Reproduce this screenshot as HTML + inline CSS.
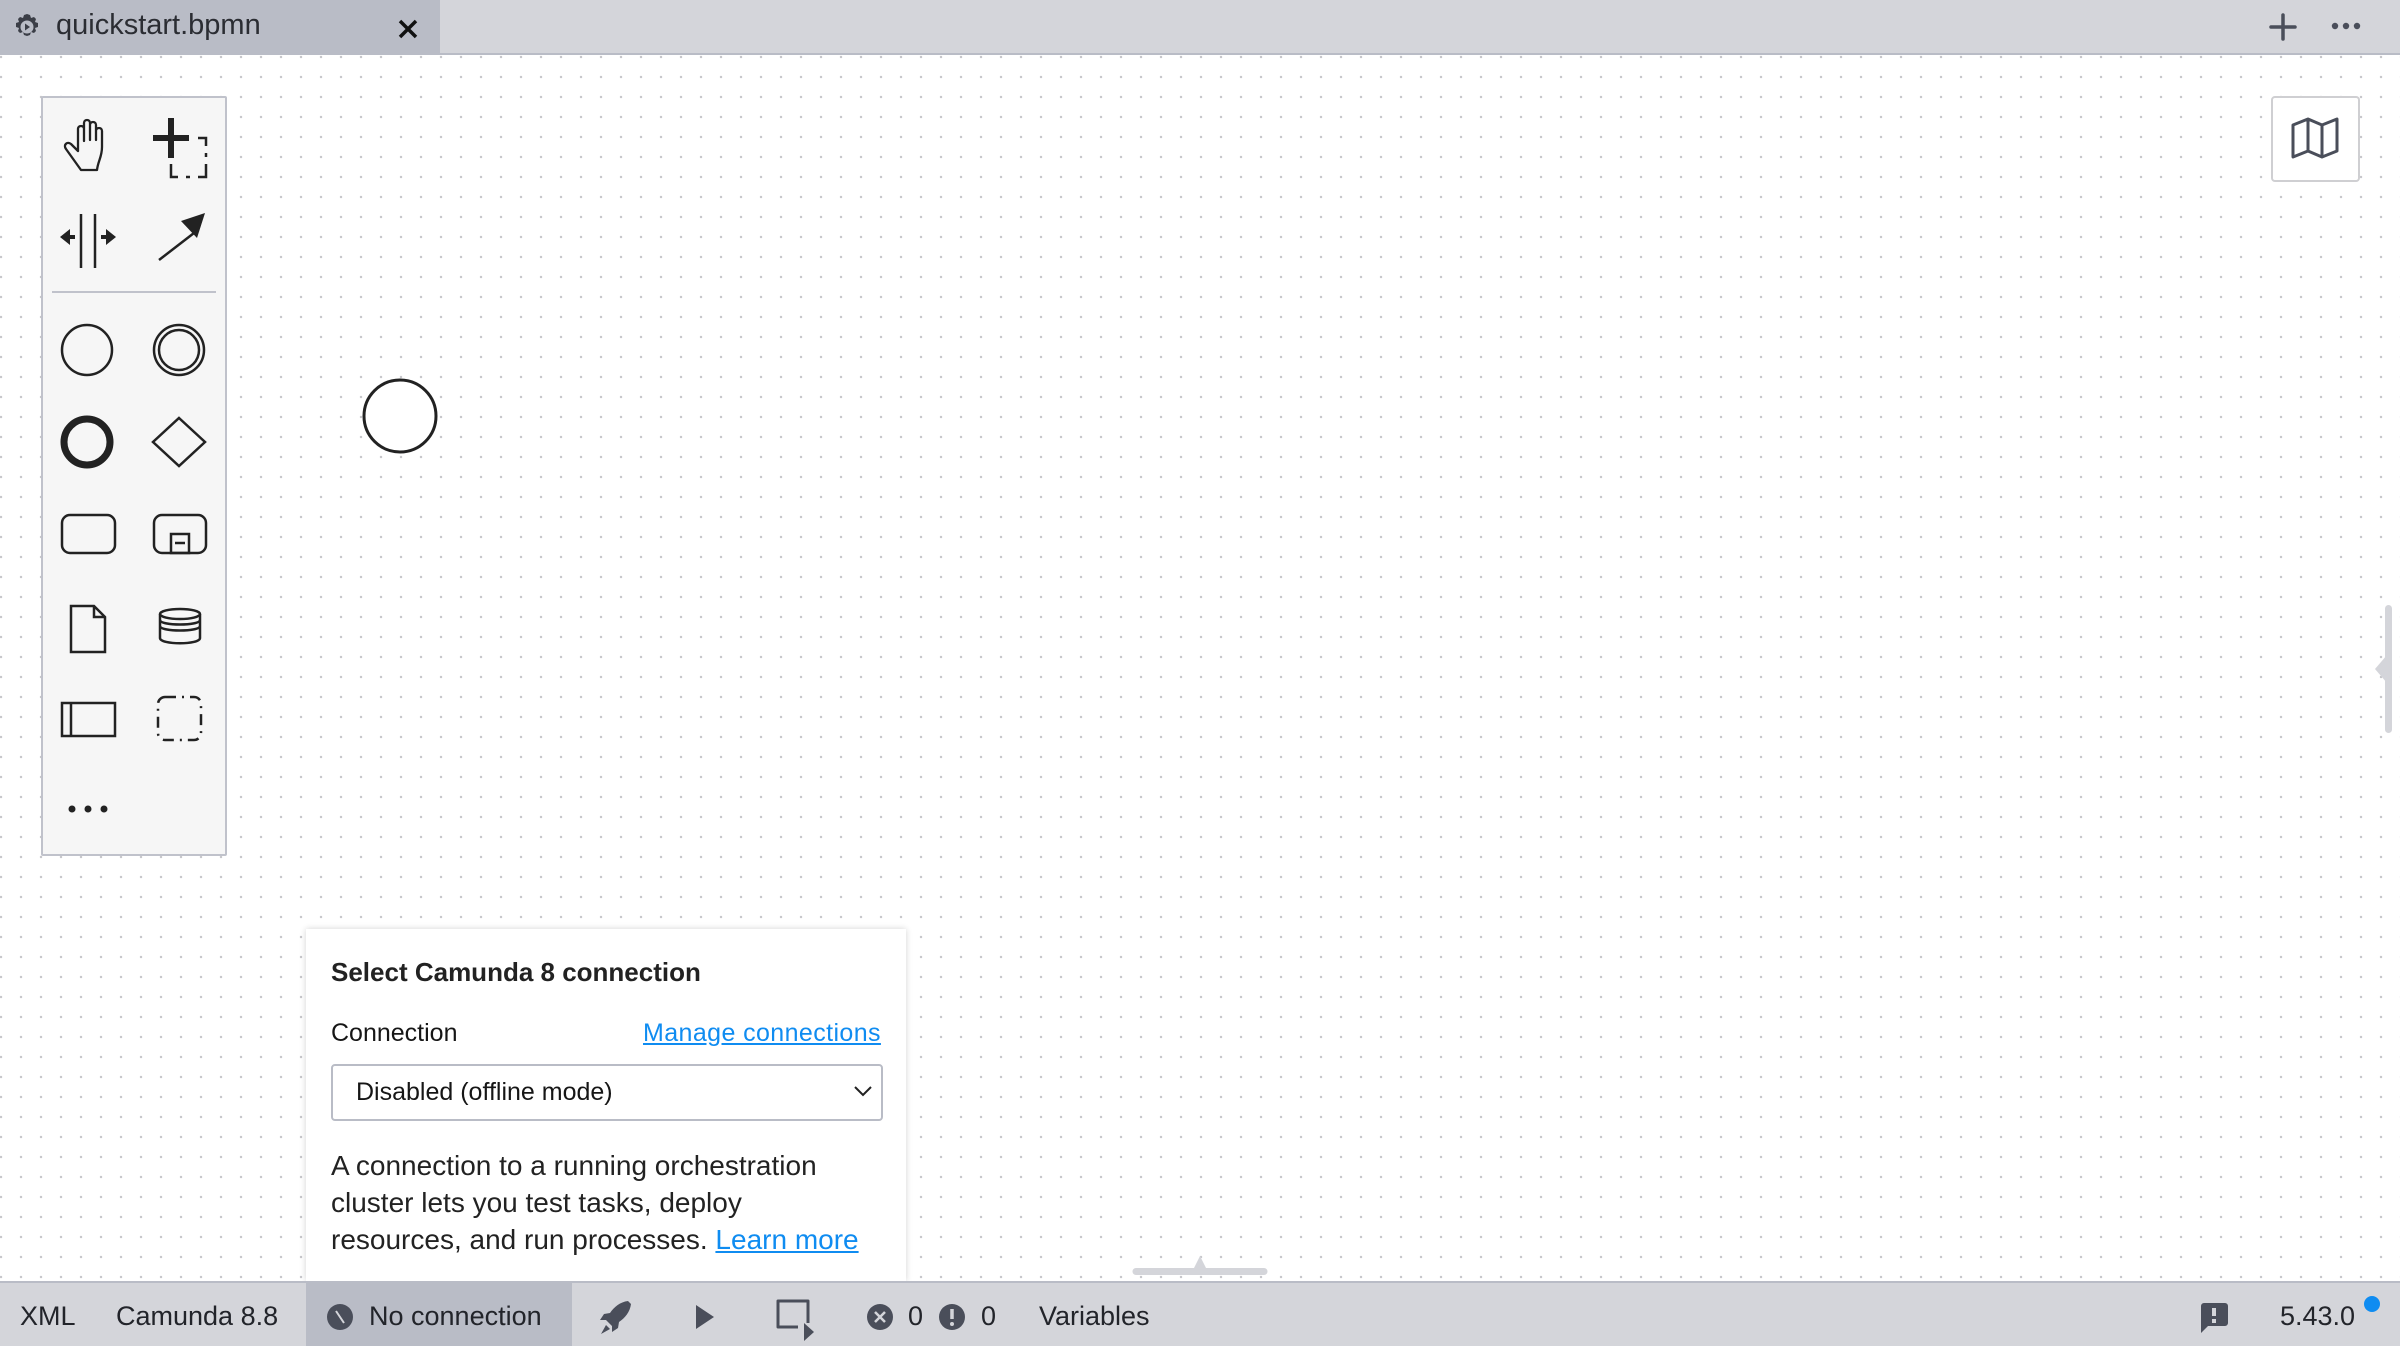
<!DOCTYPE html>
<html><head><meta charset="utf-8"><style>
*{margin:0;padding:0;box-sizing:border-box}
body{width:2400px;height:1346px;overflow:hidden;position:relative;font-family:"Liberation Sans",sans-serif;color:#161616;
background-color:#fff;background-image:radial-gradient(circle,#c8c8cc 1.1px,transparent 1.4px);background-size:20px 20px;background-position:-9px 7px}
.abs{position:absolute}
#tabbar{left:0;top:0;width:2400px;height:55px;background:#d4d5da;border-bottom:2px solid #b9bcc6}
#tab{left:0;top:0;width:440px;height:54px;background:#b9bcc6}
#status{left:0;top:1281px;width:2400px;height:65px;background:#d4d5da;border-top:2px solid #b9bcc6;font-size:27px;color:#22242a}
.st{position:absolute;top:18px;line-height:30px}
#tool{left:41px;top:96px;width:186px;height:760px;background:#f6f6f6;border:2px solid #c0c2cb;border-radius:2px}
#pop{left:306px;top:929px;width:600px;height:352px;background:#fff;box-shadow:0 0 6px rgba(0,0,0,.18)}
a{color:#0f8cf1;text-decoration:underline}
</style></head><body>
<div id="tabbar" class="abs"></div>
<div id="tab" class="abs">
<svg class="abs" style="left:12px;top:12px" width="30" height="30" viewBox="0 0 30 30"><path d="M15 2l3 1 1 3 3-1 2 2-1 3 3 1v4l-3 1 1 3-2 2-3-1-1 3-3 1-3-1-1-3-3 1-2-2 1-3-3-1v-4l3-1-1-3 2-2 3 1 1-3z" fill="#3b3e47"/><circle cx="15" cy="15" r="6.5" fill="#b9bcc6"/><path d="M13 11.5v7l5-3.5z" fill="#3b3e47"/></svg>
<div class="abs" style="left:56px;top:9px;font-size:29px;color:#2b2d33">quickstart.bpmn</div>
<svg class="abs" style="left:397px;top:18px" width="22" height="22"><path d="M3 3L19 19M19 3L3 19" stroke="#111" stroke-width="3.5"/></svg>
</div>
<svg class="abs" style="left:2268px;top:12px" width="30" height="30"><path d="M15 3v24M3 15h24" stroke="#4a4e5a" stroke-width="3.5" stroke-linecap="round"/></svg>
<svg class="abs" style="left:2330px;top:20px" width="32" height="12"><circle cx="5" cy="6" r="3.2" fill="#4a4e5a"/><circle cx="16" cy="6" r="3.2" fill="#4a4e5a"/><circle cx="27" cy="6" r="3.2" fill="#4a4e5a"/></svg>
<div class="abs" style="left:2271px;top:96px;width:89px;height:86px;border:2px solid #cfcfd2;border-radius:4px;background:#fff"></div>
<svg class="abs" style="left:2290px;top:115px" width="50" height="45" viewBox="0 0 50 45"><path d="M3 10l15-6 14 6 15-6v32l-15 6-14-6-15 6z M18 4v32 M32 10v32" fill="none" stroke="#4a4e5a" stroke-width="3" stroke-linejoin="round"/></svg>

<div id="tool" class="abs"></div>
<svg class="abs" style="left:0;top:0" width="260" height="880">
<g transform="translate(0,-22)">
<path d="M81 192 L66 171 c-3-4 1-8 5-5 l7 7 V151 c0-4 6-4 6 0 v12 V145 c0-4 6-4 6 0 v17 V147 c0-4 6-4 6 0 v15 V153 c0-4 6-4 6 0 v16 c0 10-4 14-5 23 z" fill="none" stroke="#222" stroke-width="2.3" stroke-linejoin="round"/>
</g>
<g transform="translate(0,-18)">
<g fill="#222">
<rect x="168" y="136" width="6" height="40"/><rect x="153" y="153" width="36" height="6"/>
</g>
<path d="M198 156h8v8 M206 171v4 M206 182v13h-8 M190 195h-4 M178 195h-7v-13" fill="none" stroke="#222" stroke-width="2.5"/>
</g>
<g fill="none" stroke="#222" stroke-width="2.5">
<line x1="81" y1="214" x2="81" y2="268"/><line x1="95" y1="214" x2="95" y2="268"/>
<line x1="159" y1="260" x2="194" y2="233"/>
</g>
<path d="M60 237l10-8v16z M116 237l-10-8v16z" fill="#222"/>
<rect x="68" y="235" width="7" height="4" fill="#222"/><rect x="101" y="235" width="7" height="4" fill="#222"/>
<path d="M205 213l-8 25-16-17z" fill="#222"/>
<line x1="52" y1="292" x2="216" y2="292" stroke="#c0c2cb" stroke-width="2"/>
<circle cx="87" cy="350" r="25" fill="none" stroke="#222" stroke-width="2.5"/>
<circle cx="179" cy="350" r="25" fill="none" stroke="#222" stroke-width="2.5"/>
<circle cx="179" cy="350" r="20" fill="none" stroke="#222" stroke-width="2.5"/>
<circle cx="87" cy="442" r="23" fill="none" stroke="#222" stroke-width="7"/>
<path d="M179 418l26 24-26 24-26-24z" fill="none" stroke="#222" stroke-width="2.5"/>
<rect x="62" y="515" width="53" height="38" rx="8" fill="none" stroke="#222" stroke-width="2.5"/>
<rect x="154" y="515" width="52" height="38" rx="8" fill="none" stroke="#222" stroke-width="2.5"/>
<rect x="171" y="534" width="18" height="19" fill="none" stroke="#222" stroke-width="2.5"/>
<line x1="175" y1="543" x2="185" y2="543" stroke="#222" stroke-width="2.5"/>
<path d="M71 606h23l11 11v35h-34z M94 606v11h11" fill="none" stroke="#222" stroke-width="2.5"/>
<ellipse cx="180" cy="614" rx="20" ry="5" fill="none" stroke="#222" stroke-width="2.5"/>
<path d="M160 614v24c0 7 40 7 40 0v-24 M160 620c0 6 40 6 40 0 M160 626c0 6 40 6 40 0" fill="none" stroke="#222" stroke-width="2.5"/>
<rect x="62" y="703" width="53" height="33" fill="none" stroke="#222" stroke-width="2.5"/>
<line x1="71" y1="703" x2="71" y2="736" stroke="#222" stroke-width="2.5"/>
<rect x="158" y="697" width="43" height="43" rx="7" fill="none" stroke="#222" stroke-width="2.5" stroke-dasharray="11 6 2 6"/>
<circle cx="72" cy="809" r="3.5" fill="#222"/><circle cx="88" cy="809" r="3.5" fill="#222"/><circle cx="104" cy="809" r="3.5" fill="#222"/>
</svg>

<svg class="abs" style="left:360px;top:376px" width="80" height="80"><circle cx="40" cy="40" r="36" fill="#fff" stroke="#222" stroke-width="3"/></svg>

<svg class="abs" style="left:1130px;top:1250px" width="140" height="30"><path d="M6 18h58l6-12 6 12h58a3 3 0 0 1 0 7H6a3 3 0 0 1 0-7z" fill="#d4d5da"/></svg>
<svg class="abs" style="left:2370px;top:600px" width="30" height="140"><rect x="15" y="5" width="7" height="128" rx="3.5" fill="#d4d5da"/><path d="M5 69l12-14v28z" fill="#d4d5da"/></svg>

<div id="pop" class="abs">
<div class="abs" style="left:25px;top:28px;font-size:26px;font-weight:bold;color:#222">Select Camunda 8 connection</div>
<div class="abs" style="left:25px;top:90px;font-size:25px">Connection</div>
<a class="abs" style="left:337px;top:90px;font-size:25px;letter-spacing:0.4px">Manage connections</a>
<div class="abs" style="left:25px;top:135px;width:552px;height:57px;border:2px solid #b9bcc6;border-radius:4px">
<div class="abs" style="left:23px;top:12px;font-size:25px">Disabled (offline mode)</div>
<svg class="abs" style="left:520px;top:18px" width="20" height="14"><path d="M2 3l8 8 8-8" fill="none" stroke="#222" stroke-width="2"/></svg>
</div>
<div class="abs" style="left:25px;top:218px;width:580px;font-size:28px;line-height:37px;color:#222;white-space:nowrap">A connection to a running orchestration<br>cluster lets you test tasks, deploy<br>resources, and run processes. <a>Learn more</a></div>
</div>

<div id="status" class="abs">
<div class="st" style="left:20px">XML</div>
<div class="st" style="left:116px">Camunda 8.8</div>
<div class="abs" style="left:306px;top:-2px;width:266px;height:65px;background:#b9bcc6"></div>
<svg class="abs" style="left:326px;top:20px" width="28" height="28"><circle cx="14" cy="14" r="13" fill="#4a4e5a"/><path d="M10 8l8 12" stroke="#d4d5da" stroke-width="2"/></svg>
<div class="st" style="left:369px">No connection</div>
<svg class="abs" style="left:598px;top:16px" width="34" height="38"><path d="M30 2c-8 1-14 6-18 12l-6 1-4 6 6 0 6 6 0 6 6-4 1-6c6-4 11-10 12-18z M8 26l-5 9 9-5z" fill="#4a4e5a"/></svg>
<svg class="abs" style="left:694px;top:20px" width="22" height="28"><path d="M2 2l18 12-18 12z" fill="#4a4e5a"/></svg>
<svg class="abs" style="left:774px;top:14px" width="46" height="44"><path d="M24 30H4V4h30v22" fill="none" stroke="#4a4e5a" stroke-width="3" stroke-linejoin="round"/><path d="M30 26l10 9-10 9z" fill="#4a4e5a"/></svg>
<svg class="abs" style="left:866px;top:20px" width="28" height="28"><circle cx="14" cy="14" r="13" fill="#4a4e5a"/><path d="M9 9l10 10M19 9L9 19" stroke="#d4d5da" stroke-width="2.5"/></svg>
<div class="st" style="left:908px">0</div>
<svg class="abs" style="left:938px;top:20px" width="28" height="28"><circle cx="14" cy="14" r="13" fill="#4a4e5a"/><path d="M14 6v10" stroke="#d4d5da" stroke-width="3.5"/><circle cx="14" cy="21" r="2" fill="#d4d5da"/></svg>
<div class="st" style="left:981px">0</div>
<div class="st" style="left:1039px">Variables</div>
<svg class="abs" style="left:2198px;top:18px" width="30" height="34"><path d="M3 5a3 3 0 0 1 3-3h21a3 3 0 0 1 3 3v17a3 3 0 0 1-3 3H10l-7 7z" fill="#4a4e5a"/><rect x="14" y="7" width="4" height="8" fill="#d4d5da"/><rect x="14" y="18" width="4" height="4" fill="#d4d5da"/></svg>
<div class="st" style="left:2280px">5.43.0</div>
<div class="abs" style="left:2364px;top:13px;width:16px;height:16px;border-radius:50%;background:#0f8cf1"></div>
</div>
</body></html>
